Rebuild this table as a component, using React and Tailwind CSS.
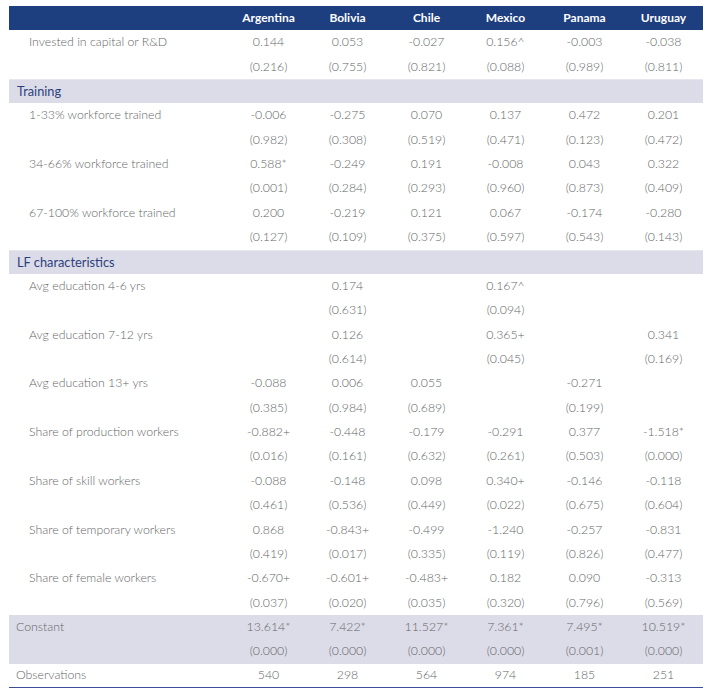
import React from 'react';

const COLS = ['Argentina', 'Bolivia', 'Chile', 'Mexico', 'Panama', 'Uruguay'];

const ROWS = [
  { type: 'var', label: 'Invested in capital or R&D', coef: ['0.144', '0.053', '-0.027', '0.156^', '-0.003', '-0.038'], p: ['(0.216)', '(0.755)', '(0.821)', '(0.088)', '(0.989)', '(0.811)'] },
  { type: 'section', label: 'Training' },
  { type: 'var', label: '1-33% workforce trained', coef: ['-0.006', '-0.275', '0.070', '0.137', '0.472', '0.201'], p: ['(0.982)', '(0.308)', '(0.519)', '(0.471)', '(0.123)', '(0.472)'] },
  { type: 'var', label: '34-66% workforce trained', coef: ['0.588*', '-0.249', '0.191', '-0.008', '0.043', '0.322'], p: ['(0.001)', '(0.284)', '(0.293)', '(0.960)', '(0.873)', '(0.409)'] },
  { type: 'var', label: '67-100% workforce trained', coef: ['0.200', '-0.219', '0.121', '0.067', '-0.174', '-0.280'], p: ['(0.127)', '(0.109)', '(0.375)', '(0.597)', '(0.543)', '(0.143)'] },
  { type: 'section', label: 'LF characteristics' },
  { type: 'var', label: 'Avg education 4-6 yrs', coef: ['', '0.174', '', '0.167^', '', ''], p: ['', '(0.631)', '', '(0.094)', '', ''] },
  { type: 'var', label: 'Avg education 7-12 yrs', coef: ['', '0.126', '', '0.365+', '', '0.341'], p: ['', '(0.614)', '', '(0.045)', '', '(0.169)'] },
  { type: 'var', label: 'Avg education 13+ yrs', coef: ['-0.088', '0.006', '0.055', '', '-0.271', ''], p: ['(0.385)', '(0.984)', '(0.689)', '', '(0.199)', ''] },
  { type: 'var', label: 'Share of production workers', coef: ['-0.882+', '-0.448', '-0.179', '-0.291', '0.377', '-1.518*'], p: ['(0.016)', '(0.161)', '(0.632)', '(0.261)', '(0.503)', '(0.000)'] },
  { type: 'var', label: 'Share of skill workers', coef: ['-0.088', '-0.148', '0.098', '0.340+', '-0.146', '-0.118'], p: ['(0.461)', '(0.536)', '(0.449)', '(0.022)', '(0.675)', '(0.604)'] },
  { type: 'var', label: 'Share of temporary workers', coef: ['0.868', '-0.843+', '-0.499', '-1.240', '-0.257', '-0.831'], p: ['(0.419)', '(0.017)', '(0.335)', '(0.119)', '(0.826)', '(0.477)'] },
  { type: 'var', label: 'Share of female workers', coef: ['-0.670+', '-0.601+', '-0.483+', '0.182', '0.090', '-0.313'], p: ['(0.037)', '(0.020)', '(0.035)', '(0.320)', '(0.796)', '(0.569)'] },
];

const CONSTANT = {
  coef: ['13.614*', '7.422*', '11.527*', '7.361*', '7.495*', '10.519*'],
  p: ['(0.000)', '(0.000)', '(0.000)', '(0.000)', '(0.001)', '(0.000)'],
};
const OBS = ['540', '298', '564', '974', '185', '251'];

function Cells({ values }) {
  return values.map((v, i) => (
    <div key={i} className="w-[79px] shrink-0 text-center">
      {v}
    </div>
  ));
}

function Row({ label, values, indent, className = '' }) {
  return (
    <div className={`flex items-center h-[24.36px] ${className}`}>
      <div className={`w-[220px] shrink-0 ${indent ? 'pl-[20px]' : 'pl-[7px]'}`}>{label}</div>
      <Cells values={values} />
    </div>
  );
}

export default function App() {
  return (
    <div className="min-h-screen bg-white pt-[6px] pl-[9px] font-['Lato',sans-serif] text-[12.3px] font-light text-[#666]">
      <div className="w-[694px]">
        {/* Header */}
        <div className="flex items-center h-[24.36px] bg-[#1d3e7f] text-white font-bold text-[12px]">
          <div className="w-[220px] shrink-0" />
          {COLS.map((c) => (
            <div key={c} className="w-[79px] shrink-0 text-center">{c}</div>
          ))}
        </div>

        {ROWS.map((r) =>
          r.type === 'section' ? (
            <div key={r.label} className="flex items-center h-[24.36px] bg-[#dcdce9] border-t border-[#e6e6ee] pl-[8px] text-[#2c3f7c] font-normal text-[12.8px]">
              {r.label}
            </div>
          ) : (
            <React.Fragment key={r.label}>
              <Row label={r.label} values={r.coef} indent />
              <Row label="" values={r.p} indent />
            </React.Fragment>
          )
        )}

        {/* Constant */}
        <div className="bg-[#dcdce9]">
          <Row label="Constant" values={CONSTANT.coef} />
          <Row label="" values={CONSTANT.p} />
        </div>

        <Row label="Observations" values={OBS} className="border-b-[1.5px] border-[#3b4f98]" />
      </div>
    </div>
  );
}
